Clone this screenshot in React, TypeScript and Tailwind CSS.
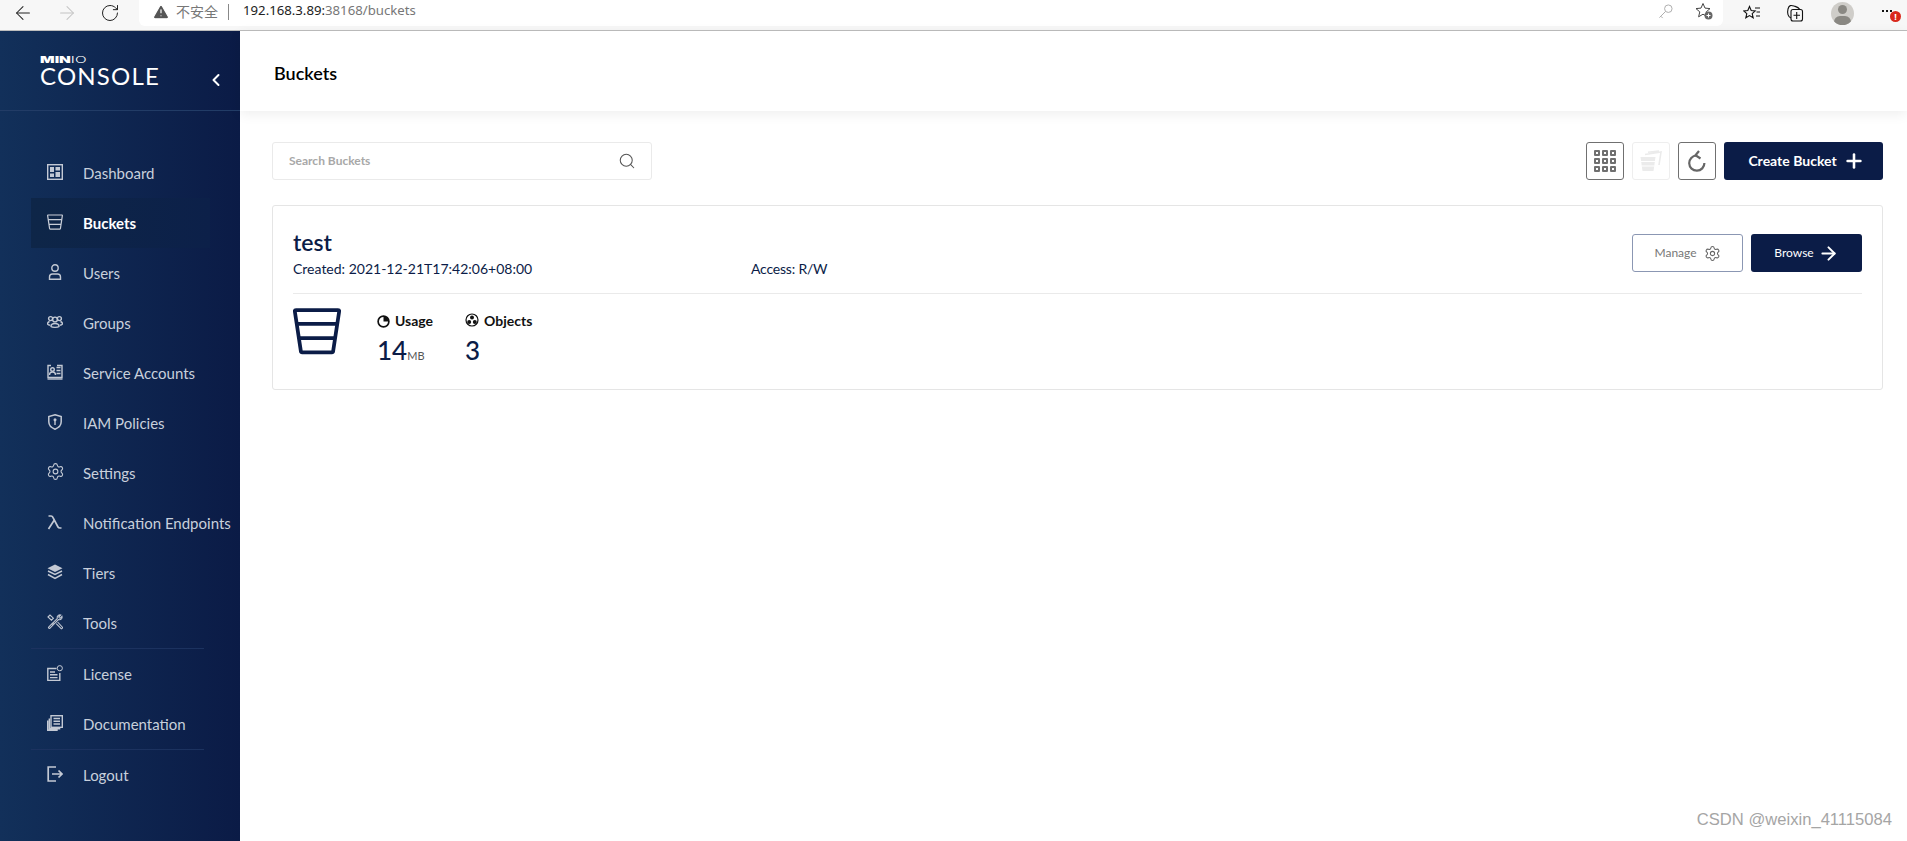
import { ReactNode } from 'react';
import { ArrowLeft, ArrowRight, ChevronLeft, Plus, RotateCw, Search, Settings, TriangleAlert } from 'lucide-react';

const sw = { fill: 'none', stroke: 'currentColor', strokeWidth: 1.4 };

function Ic({ children, className = 'w-[16px] h-[16px]' }: { children: ReactNode; className?: string }) {
  return (
    <svg viewBox="0 0 16 16" className={className} {...sw}>
      {children}
    </svg>
  );
}

function BucketIcon({ className, strokeWidth = 1.2 }: { className?: string; strokeWidth?: number }) {
  return (
    <svg viewBox="0 0 16 16" className={className} fill="none" stroke="currentColor" strokeWidth={strokeWidth} strokeLinejoin="round">
      <path d="M1 1h14c.3 0 .4.2.4.4L13.4 14.6c0 .3-.2.5-.5.5H3.1c-.3 0-.5-.2-.5-.5L.6 1.4c0-.2.1-.4.4-.4z" />
      <path d="M1.2 5.6h13.6M2 10.4h12" />
    </svg>
  );
}

const navIcons: Record<string, ReactNode> = {
  Dashboard: (
    <Ic>
      <rect x="0.7" y="0.7" width="14.6" height="14.6" />
      <rect x="3" y="3" width="4" height="5" fill="currentColor" stroke="none" />
      <rect x="3" y="9.5" width="4" height="3.5" fill="currentColor" stroke="none" />
      <rect x="8.5" y="3" width="4.5" height="3.5" fill="currentColor" stroke="none" />
      <rect x="8.5" y="8" width="4.5" height="5" fill="currentColor" stroke="none" />
    </Ic>
  ),
  Buckets: <BucketIcon className="w-[16px] h-[16px]" />,
  Users: (
    <Ic>
      <circle cx="8" cy="4" r="3.2" />
      <path d="M2.5 15.2v-2.2c0-1.8 1.4-3 3-3h5c1.6 0 3 1.2 3 3v2.2z" />
    </Ic>
  ),
  Groups: (
    <Ic>
      <circle cx="8" cy="5.5" r="2.4" />
      <circle cx="3.6" cy="4.6" r="2" />
      <circle cx="12.4" cy="4.6" r="2" />
      <path d="M4 12.5c0-2 1.6-3 4-3s4 1 4 3c-1 1.2-7 1.2-8 0z" />
      <path d="M2.6 7.5C1.2 8 .5 9 .5 10c.4.8 1.6 1.2 2.8 1.2M13.4 7.5c1.4.5 2.1 1.5 2.1 2.5-.4.8-1.6 1.2-2.8 1.2" />
    </Ic>
  ),
  'Service Accounts': (
    <Ic>
      <path d="M4 1.5H1v12h14v-12h-5" />
      <circle cx="5.5" cy="5.5" r="1.8" />
      <path d="M2.5 11c0-2 1-3 3-3s3 1 3 3M9.5 3.5h4M9.5 6.5h4M9.5 9.5h4" />
      <path d="M.5 15h15" />
    </Ic>
  ),
  'IAM Policies': (
    <Ic>
      <path d="M8 .8l6.2 1.8v5.2c0 3.6-2.6 6-6.2 7.4C4.4 13.8 1.8 11.4 1.8 7.8V2.6z" strokeWidth="1.5" />
      <circle cx="8" cy="5.8" r="1.5" fill="currentColor" stroke="none" />
      <rect x="7.3" y="6" width="1.4" height="5" fill="currentColor" stroke="none" />
    </Ic>
  ),
  Settings: <Settings className="w-[19px] h-[19px] -m-[1.5px]" strokeWidth={1.4} />,
  'Notification Endpoints': (
    <Ic>
      <path d="M1.5 2h2.6c1 0 1.4.5 1.8 1.4L11 13c.4.8.8 1 2 1h1.5M7 6.5L1.5 15" strokeWidth="1.7" />
    </Ic>
  ),
  Tiers: (
    <Ic>
      <path d="M8 .6l7.5 3.6L8 8 .5 4.2z" fill="currentColor" stroke="none" />
      <path d="M1 7l7 3.5L15 7M1 10.5L8 14.5l7-4" strokeWidth="1.5" />
    </Ic>
  ),
  Tools: (
    <Ic>
      <path d="M1.6 13.2l8.6-8.6c-.3-1.6.2-2.8 1.3-3.4.8-.4 1.6-.4 2.2-.2l-2 2 1.3 1.3 2-2c.2.8.1 1.6-.4 2.3-.8 1-1.9 1.3-3.2 1l-8.4 8.6c-.8.6-2-.6-1.4-1z" strokeWidth="1.1" />
      <path d="M1 3l2-2 3.4 3.2-2 2zM6.8 8.6l-2 2M9.2 9.6l5.2 5.2c.8-.2 1.2-.8 1-1.6L10.6 8" strokeWidth="1.1" />
    </Ic>
  ),
  License: (
    <Ic>
      <path d="M9.5 3.5H.8v12H12.8V8" />
      <path d="M3 7h5M3 9.8h7.5M3 12.6h7.5" />
      <circle cx="12.8" cy="3.2" r="2.6" strokeWidth="1" />
    </Ic>
  ),
  Documentation: (
    <Ic>
      <rect x="4" y="0.7" width="11.3" height="11.6" />
      <path d="M6.5 3.5h6.5M6.5 6.2h6.5M6.5 9h6.5" />
      <path d="M2.3 3.5v10.2h11M.7 5.5v9.8h10" />
    </Ic>
  ),
  Logout: (
    <Ic>
      <path d="M9 1H1.2v14H9" strokeWidth="1.7" />
      <path d="M5 8h10M11.5 4.5L15 8l-3.5 3.5" strokeWidth="1.7" />
    </Ic>
  ),
};

function NavItem({ label, active = false }: { label: string; active?: boolean }) {
  return (
    <div
      className={`flex items-center h-[50px] ml-[31px] mr-[30px] pl-[16px] whitespace-nowrap ${
        active ? 'bg-gradient-to-r from-[#0e2648] to-[#0c2049]' : ''
      }`}
    >
      <span className={`w-[36px] shrink-0 -mt-[3px] flex ${active ? 'text-[#c9ced8]' : 'text-[#c3c9d4]'}`}>{navIcons[label]}</span>
      <span className={`text-[15px] ${active ? 'font-bold text-white' : 'text-[#c8d0dc]'}`}>{label}</span>
    </div>
  );
}

function Divider() {
  return <div className="h-px ml-[31px] mr-[36px] bg-[#1c325f]" />;
}

function Sidebar() {
  return (
    <aside className="w-[240px] shrink-0 bg-gradient-to-r from-[#12305a] to-[#0b1b46] flex flex-col">
      <div className="h-[80px] border-b border-[#223c66] relative pl-[40px] pt-[25px] text-white">
        <div className="flex h-[8px] text-[9px] font-black leading-[8px] font-['Inter',sans-serif] origin-left scale-x-[1.7]">
          <span>MIN</span>
          <span className="font-light">IO</span>
        </div>
        <div className="mt-[1px] text-[24px] leading-[22px] tracking-[1.2px] font-normal font-['Lato',sans-serif]">CONSOLE</div>
        <ChevronLeft className="absolute left-[206px] top-[39px] w-[20px] h-[20px]" strokeWidth={2.4} />
      </div>
      <nav className="pt-[37px] flex flex-col">
        <NavItem label="Dashboard" />
        <NavItem label="Buckets" active />
        <NavItem label="Users" />
        <NavItem label="Groups" />
        <NavItem label="Service Accounts" />
        <NavItem label="IAM Policies" />
        <NavItem label="Settings" />
        <NavItem label="Notification Endpoints" />
        <NavItem label="Tiers" />
        <NavItem label="Tools" />
        <Divider />
        <NavItem label="License" />
        <NavItem label="Documentation" />
        <Divider />
        <NavItem label="Logout" />
      </nav>
    </aside>
  );
}

function BrowserBar() {
  return (
    <div className="h-[31px] shrink-0 bg-[#f7f7f7] border-b border-[#bdbdbd] flex font-['Noto_Sans','Noto_Sans_CJK_SC',sans-serif]">
      <div className="w-[139px] shrink-0 flex items-center pb-[4px] pl-[12px] gap-[22px]">
        <ArrowLeft className="w-[22px] h-[22px] text-[#222]" strokeWidth={1.1} />
        <ArrowRight className="w-[22px] h-[22px] text-[#c4c4c4]" strokeWidth={1.1} />
        <RotateCw className="w-[20px] h-[20px] text-[#222]" strokeWidth={1.2} />
      </div>
      <div className="w-[1584px] h-[26px] bg-white rounded-b-[6px] flex items-center pl-[13px] pr-[10px]">
        <TriangleAlert className="w-[18px] h-[18px] text-white fill-[#555] -mt-[3px]" strokeWidth={1.6} />
        <span className="ml-[6px] -mt-[4px] text-[14px] text-[#777]">不安全</span>
        <span className="ml-[10px] -mt-[3px] w-px h-[16px] bg-[#888]" />
        <span className="ml-[14px] -mt-[4px] text-[13.2px] text-[#222]">
          192.168.3.89:<span className="text-[#777]">38168/buckets</span>
        </span>
        <span className="ml-auto flex items-center gap-[22px] -mt-[4px]">
          <svg viewBox="0 0 16 16" className="w-[15px] h-[15px] text-[#aaa]" {...sw} strokeWidth={1}>
            <circle cx="11" cy="5" r="4" />
            <path d="M8 8L1.5 14.5M3 13l2 2" />
          </svg>
          <svg viewBox="0 0 18 18" className="w-[18px] h-[18px]">
            <path d="M8 1.5l2 4.6 5 .5-3.8 3.3 1.2 4.9L8 12.2l-4.4 2.6 1.2-4.9L1 6.6l5-.5z" fill="none" stroke="#444" strokeWidth="1" />
            <circle cx="13.5" cy="13.5" r="4" fill="#666" />
            <path d="M13.5 11.5v4M11.5 13.5h4" stroke="#fff" strokeWidth="1" />
          </svg>
        </span>
      </div>
      <div className="flex-1 flex items-center pb-[4px] pl-[20px]">
        <svg viewBox="0 0 18 16" className="w-[18px] h-[16px]" fill="none" stroke="#111" strokeWidth="1.1">
          <path d="M6.5 1.5l1.7 4 4 .4-3 2.7 1 4.2-3.7-2.2-3.7 2.2 1-4.2-3-2.7 4-.4zM12 3h5M13.5 7h3.5M13 11h4" />
        </svg>
        <svg viewBox="0 0 18 18" className="ml-[25px] w-[18px] h-[18px]" fill="none" stroke="#111" strokeWidth="1.1">
          <rect x="5" y="5.5" width="11.5" height="11.5" rx="2" />
          <path d="M10.7 8v7M7.5 11.3h6.5M5 14C2 13 1 9 2 5s3-4 6-3 4 1 6 3.5" />
        </svg>
        <span className="ml-[27px] w-[23px] h-[23px] rounded-full bg-[#cfcdc9] relative overflow-hidden">
          <span className="absolute left-[7px] top-[3px] w-[9px] h-[9px] rounded-full bg-[#8a8883]" />
          <span className="absolute left-[3px] top-[14px] w-[17px] h-[12px] rounded-full bg-[#8a8883]" />
        </span>
        <span className="ml-[28px] flex gap-[2px] -mt-[4px]">
          <span className="w-[2px] h-[2px] bg-[#111]" />
          <span className="w-[2px] h-[2px] bg-[#111]" />
          <span className="w-[2px] h-[2px] bg-[#111]" />
        </span>
        <span className="ml-[-2px] mt-[6px] w-[11px] h-[11px] rounded-full bg-[#d9281c] text-white text-[9px] leading-[11px] font-bold text-center">!</span>
      </div>
    </div>
  );
}

function Toolbar() {
  return (
    <div className="flex items-center mt-[31px]">
      <div className="w-[380px] h-[38px] border border-[#eaeaea] rounded-[3px] flex items-center pl-[16px] pr-[15px]">
        <span className="text-[12px] font-bold text-[#a8a8a8]">Search Buckets</span>
        <Search className="ml-auto w-[18px] h-[18px] text-[#555]" strokeWidth={1.4} />
      </div>
      <div className="ml-auto flex items-center gap-[8px]">
        <button className="w-[38px] h-[38px] border border-[#707070] rounded-[3px] flex items-center justify-center">
          <span className="grid grid-cols-3 gap-[2px]">
            {[...Array(9)].map((_, i) => (
              <span key={i} className="w-[6px] h-[6px] border-2 border-[#707070] rounded-[1px]" />
            ))}
          </span>
        </button>
        <button className="w-[38px] h-[38px] border border-[#eeeeee] rounded-[3px] flex items-center justify-center text-[#ebebeb]">
          <svg viewBox="0 0 22 22" className="w-[22px] h-[22px]">
            <path d="M0.5 7h15L13.5 21H2.5z" fill="currentColor" />
            <path d="M5 4.5L18 2.5 21 2 19 15M8 2.2L19 1" fill="none" stroke="currentColor" strokeWidth="1.6" />
            <path d="M1 11.5h14M1.5 16h13" stroke="#fff" strokeWidth="1.2" />
          </svg>
        </button>
        <button className="w-[38px] h-[38px] border border-[#707070] rounded-[3px] flex items-center justify-center text-[#666]">
          <svg viewBox="0 0 20 22" className="w-[20px] h-[22px]" fill="none" stroke="currentColor" strokeWidth="2.2">
            <path d="M9.5 5.5A7.6 7.6 0 1 0 17.4 13" />
            <path d="M12 1L8.5 5.3 13.5 8.5" />
          </svg>
        </button>
        <button className="w-[159px] h-[38px] bg-[#0b1c47] rounded-[3px] text-white text-[14px] font-bold flex items-center justify-center gap-[6px] pl-[6px] pb-[1px]">
          Create Bucket
          <Plus className="w-[22px] h-[22px]" strokeWidth={2.8} />
        </button>
      </div>
    </div>
  );
}

function Metric({ icon, label, children }: { icon: ReactNode; label: string; children: ReactNode }) {
  return (
    <div className="flex flex-col pt-[5px]">
      <div className="flex items-center gap-[5px] text-[14px] font-bold text-[#111] leading-[18px]">
        {icon}
        {label}
      </div>
      <div className="text-[#0b1c47] text-[26px] font-medium leading-[30px] mt-[5px]">{children}</div>
    </div>
  );
}

function BucketCard() {
  return (
    <div className="mt-[25px] h-[185px] border border-[#e5e5e5] rounded-[3px] pl-[20px] pr-[20px] text-[#0b1c47]">
      <div className="h-[88px] border-b border-[#eaeaea] flex items-start">
        <div className="pt-[21px] w-[458px]">
          <div className="text-[23px] font-semibold leading-[30px]">test</div>
          <div className="text-[14px] leading-[18px] mt-[3px]">Created: 2021-12-21T17:42:06+08:00</div>
        </div>
        <div className="pt-[54px] text-[14px] leading-[18px] tracking-[-0.2px]">Access: R/W</div>
        <div className="ml-auto pt-[28px] flex gap-[8px]">
          <button className="w-[111px] h-[38px] border border-[#8b97b3] rounded-[3px] flex items-center justify-center gap-[7px] text-[12px] text-[#777]">
            Manage
            <Settings className="w-[17px] h-[17px] text-[#666]" strokeWidth={1.5} />
          </button>
          <button className="w-[111px] h-[38px] bg-[#0b1c47] rounded-[3px] flex items-center justify-center gap-[4px] text-[12px] text-white">
            Browse
            <ArrowRight className="w-[21px] h-[21px]" strokeWidth={2.2} />
          </button>
        </div>
      </div>
      <div className="flex pt-[13px]">
        <BucketIcon className="w-[48px] h-[48px] text-[#0b1c47]" strokeWidth={1.25} />
        <div className="ml-[36px] w-[88px]">
          <Metric
            label="Usage"
            icon={
              <svg viewBox="0 0 14 14" className="w-[13px] h-[13px] text-[#111]">
                <circle cx="7" cy="7" r="5.8" fill="none" stroke="currentColor" strokeWidth="1.8" />
                <path d="M7 1.5A5.5 5.5 0 0 1 12.5 7H7z" fill="currentColor" />
              </svg>
            }
          >
            14<span className="text-[11px] font-normal text-[#555]">MB</span>
          </Metric>
        </div>
        <Metric
          label="Objects"
          icon={
            <svg viewBox="0 0 14 14" className="w-[14px] h-[14px] -mt-[2px] text-[#111]">
              <circle cx="7" cy="7" r="6" fill="none" stroke="currentColor" strokeWidth="1.2" />
              <circle cx="7" cy="4.4" r="2" fill="currentColor" />
              <circle cx="4.2" cy="9" r="2" fill="currentColor" />
              <circle cx="9.8" cy="9" r="2" fill="currentColor" />
            </svg>
          }
        >
          3
        </Metric>
      </div>
    </div>
  );
}

export default function App() {
  return (
    <div className="h-[841px] w-[1907px] overflow-hidden flex flex-col relative bg-white font-['Lato',sans-serif]">
      <BrowserBar />
      <div className="flex flex-1 min-h-0">
        <Sidebar />
        <main className="flex-1 min-w-0">
          <header className="h-[80px] flex items-center pl-[34px] pt-[5px] text-[18px] font-semibold text-black shadow-[0_3px_12px_rgba(0,0,0,0.07)]">
            Buckets
          </header>
          <div className="pl-[32px] pr-[24px]">
            <Toolbar />
            <BucketCard />
          </div>
        </main>
      </div>
      <div className="absolute right-[15px] bottom-[8px] text-[16.6px] text-[#a5a5a5] font-['Liberation_Sans',sans-serif]">CSDN @weixin_41115084</div>
    </div>
  );
}
